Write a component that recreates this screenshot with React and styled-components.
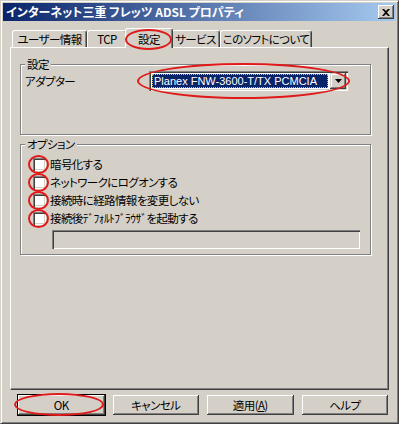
import React from "react";
import styled, { createGlobalStyle } from "styled-components";

const GlobalStyle = createGlobalStyle`
  html, body {
    margin: 0;
    padding: 0;
    background: #d4d0c8;
  }
  body {
    font-family: "Noto Sans CJK JP", "Liberation Sans", sans-serif;
    font-size: 12px;
  }
`;

const Window = styled.div`
  box-sizing: border-box;
  width: 399px;
  height: 424px;
  background: #d4d0c8;
  border-top: 1px solid #d4d0c8;
  border-left: 1px solid #d4d0c8;
  border-right: 1px solid #404040;
  border-bottom: 1px solid #404040;
  box-shadow: inset 1px 1px #fff, inset -1px -1px #808080;
  padding: 2px;
  display: flex;
  flex-direction: column;
  color: #000;
  font-size: 11.5px;
  letter-spacing: -0.6px;
  font-feature-settings: "palt";
`;

const TitleBar = styled.div`
  height: 18px;
  display: flex;
  align-items: center;
  padding: 0 2px 0 3px;
  background: linear-gradient(to right, #0a246a, #a6caf0);
`;

const TitleText = styled.div`
  color: #fff;
  font-weight: bold;
  font-size: 12px;
  letter-spacing: 0;
  line-height: 14px;
  white-space: nowrap;
`;

const CloseButton = styled.div`
  margin-left: auto;
  width: 16px;
  height: 14px;
  background: #d4d0c8;
  box-shadow: inset -1px -1px #404040, inset 1px 1px #fff,
    inset -2px -2px #808080;
  display: flex;
  align-items: center;
  justify-content: center;
`;

const Content = styled.div`
  display: flex;
  flex-direction: column;
  padding: 7px 7px 0 7px;
`;

const TabStrip = styled.div`
  height: 19px;
  display: flex;
  align-items: flex-end;
  padding-left: 2px;
  position: relative;
  z-index: 1;
`;

const Tab = styled.div`
  box-sizing: border-box;
  flex-shrink: 0;
  position: relative;
  width: ${(p) => p.$w}px;
  height: ${(p) => (p.$active ? 20 : 17)}px;
  margin: 0 ${(p) => (p.$active ? -2 : 0)}px ${(p) => (p.$active ? -1 : 0)}px;
  background: #d4d0c8;
  border-top: 1px solid #fff;
  border-left: 1px solid #fff;
  border-right: 1px solid #404040;
  border-radius: 3px 3px 0 0;
  box-shadow: inset -1px 0 #808080;
  display: flex;
  align-items: center;
  justify-content: center;
  line-height: 14px;
  white-space: nowrap;
  z-index: ${(p) => (p.$active ? 2 : 1)};
`;

const Panel = styled.div`
  box-sizing: border-box;
  height: 343px;
  border-top: 1px solid #fff;
  border-left: 1px solid #fff;
  border-right: 1px solid #404040;
  border-bottom: 1px solid #404040;
  box-shadow: inset -1px -1px #808080;
  padding: 10px 0 0 9px;
  display: flex;
  flex-direction: column;
`;

const Group = styled.fieldset`
  box-sizing: border-box;
  width: 351px;
  margin: ${(p) => p.$top || 0}px 0 0 0;
  padding: ${(p) => p.$pad};
  min-width: 0;
  border: 1px solid #808080;
  box-shadow: 1px 1px 0 #fff, inset 1px 1px 0 #fff;
`;

const Legend = styled.legend`
  padding: 0 2px;
  margin-left: 0;
  line-height: 13px;
  background: #d4d0c8;
`;

const AdapterRow = styled.div`
  display: flex;
  align-items: center;
  height: 20px;
`;

const FieldLabel = styled.div`
  width: 124px;
  line-height: 14px;
`;

const Select = styled.div`
  box-sizing: border-box;
  position: relative;
  width: 199px;
  height: 20px;
  background: #fff;
  box-shadow: inset 1px 1px #808080, inset 2px 2px #404040,
    inset -1px -1px #fff, inset -2px -2px #d4d0c8;
  padding: 2px;
  display: flex;
  align-items: stretch;
`;

const SelectValue = styled.div`
  flex: 1;
  margin: 1px 2px 1px 1px;
  background: #0a246a;
  color: #fff;
  outline: 1px dotted #c8c070;
  outline-offset: -1px;
  font-family: "Liberation Sans", sans-serif;
  font-size: 11px;
  letter-spacing: 0;
  line-height: 14px;
  padding-left: 2px;
  white-space: nowrap;
  overflow: hidden;
`;

const DropButton = styled.div`
  width: 16px;
  background: #d4d0c8;
  box-shadow: inset -1px -1px #404040, inset 1px 1px #d4d0c8,
    inset -2px -2px #808080, inset 2px 2px #fff;
  display: flex;
  align-items: center;
  justify-content: center;
`;

const CheckRow = styled.div`
  display: flex;
  align-items: center;
  height: 18px;
`;

const CheckBox = styled.span`
  position: relative;
  flex-shrink: 0;
  box-sizing: border-box;
  width: 13px;
  height: 13px;
  margin: 0 4px 0 8px;
  background: #fff;
  box-shadow: inset 1px 1px #808080, inset 2px 2px #404040,
    inset -1px -1px #fff, inset -2px -2px #d4d0c8;
`;

const CheckText = styled.span`
  line-height: 14px;
  white-space: nowrap;
`;

const TextBox = styled.div`
  box-sizing: border-box;
  width: 308px;
  height: 19px;
  margin: 3px 0 0 27px;
  background: #d4d0c8;
  box-shadow: inset 1px 1px #808080, inset 2px 2px #404040,
    inset -1px -1px #fff, inset -2px -2px #d4d0c8;
`;

const ButtonRow = styled.div`
  display: flex;
  gap: 6px;
  margin-top: 4px;
  padding-left: 7px;
`;

const Button = styled.div`
  box-sizing: border-box;
  position: relative;
  width: 89px;
  height: 22px;
  background: #d4d0c8;
  border: 1px solid ${(p) => (p.$default ? "#000" : "transparent")};
  box-shadow: inset -1px -1px #404040, inset 1px 1px #fff,
    inset -2px -2px #808080;
  display: flex;
  align-items: center;
  justify-content: center;
  line-height: 14px;
`;

const Oval = styled.span`
  position: absolute;
  border: 2px solid #e01a1a;
  border-radius: 50%;
  pointer-events: none;
`;

const TabMark = styled(Oval)`
  left: -1px;
  right: 0;
  top: 0;
  bottom: -2px;
`;

const SelectMark = styled(Oval)`
  left: -12px;
  right: -2px;
  top: -8px;
  bottom: -8px;
`;

const CheckMark = styled(Oval)`
  left: -5px;
  right: -3px;
  top: -3px;
  bottom: -3px;
`;

const ButtonMark = styled(Oval)`
  left: -4px;
  width: 86px;
  top: -2px;
  bottom: -1px;
`;

const tabs = [
  { label: "ユーザー情報", w: 75 },
  { label: "TCP", w: 40 },
  { label: "設定", w: 48, active: true },
  { label: "サービス", w: 49 },
  { label: "このソフトについて", w: 92 },
];

const options = [
  "暗号化する",
  "ネットワークにログオンする",
  "接続時に経路情報を変更しない",
  "接続後ﾃﾞﾌｫﾙﾄﾌﾞﾗｳｻﾞを起動する",
];

export default function App() {
  return (
    <>
      <GlobalStyle />
      <Window>
        <TitleBar>
          <TitleText>インターネット三重 フレッツ ADSL プロパティ</TitleText>
          <CloseButton>
            <svg width="8" height="7" viewBox="0 0 8 7">
              <path d="M0 0h2l2 2 2-2h2L5 3.5 8 7H6L4 5 2 7H0l3-3.5z" fill="#000" />
            </svg>
          </CloseButton>
        </TitleBar>
        <Content>
          <TabStrip>
            {tabs.map((t) => (
              <Tab key={t.label} $w={t.w} $active={t.active}>
                {t.label}
                {t.active && <TabMark />}
              </Tab>
            ))}
          </TabStrip>
          <Panel>
            <Group $pad="0 4px 43px 4px">
              <Legend>設定</Legend>
              <AdapterRow>
                <FieldLabel>アダプター</FieldLabel>
                <Select>
                  <SelectValue>Planex FNW-3600-T/TX PCMCIA</SelectValue>
                  <DropButton>
                    <svg width="7" height="4" viewBox="0 0 7 4">
                      <path d="M0 0h7L3.5 4z" fill="#000" />
                    </svg>
                  </DropButton>
                  <SelectMark />
                </Select>
              </AdapterRow>
            </Group>
            <Group $top={3} $pad="4px 4px 5px 4px">
              <Legend>オプション</Legend>
              {options.map((o) => (
                <CheckRow key={o}>
                  <CheckBox>
                    <CheckMark />
                  </CheckBox>
                  <CheckText>{o}</CheckText>
                </CheckRow>
              ))}
              <TextBox />
            </Group>
          </Panel>
          <ButtonRow>
            <Button $default>
              OK
              <ButtonMark />
            </Button>
            <Button>キャンセル</Button>
            <Button>
              <span>
                適用(<u>A</u>)
              </span>
            </Button>
            <Button>ヘルプ</Button>
          </ButtonRow>
        </Content>
      </Window>
    </>
  );
}
